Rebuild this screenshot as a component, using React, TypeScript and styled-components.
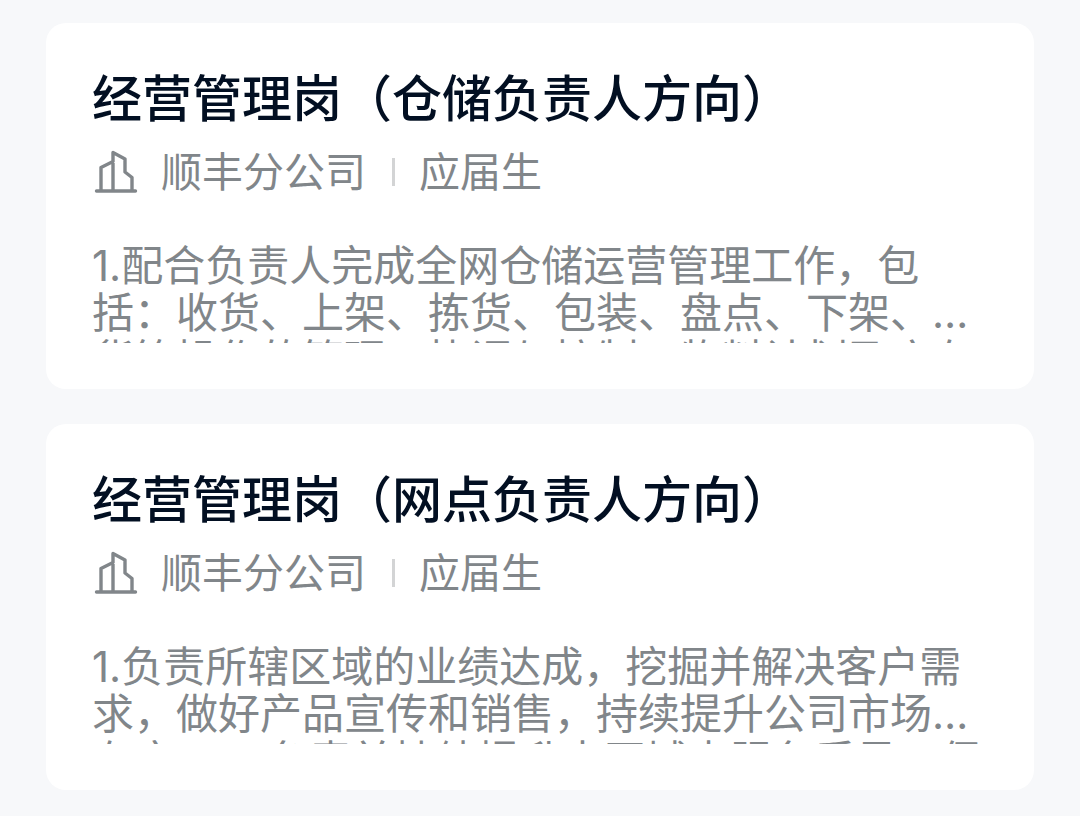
import React from "react";
import styled, { createGlobalStyle } from "styled-components";

const GlobalStyle = createGlobalStyle`
  * { box-sizing: border-box; }
  body {
    margin: 0;
    background: #f7f8fa;
    font-family: Inter, "Noto Sans CJK SC", sans-serif;
  }
`;

const List = styled.main`
  display: flex;
  flex-direction: column;
  gap: 35px;
  padding: 23px 46px 26px;
`;

const Card = styled.article`
  padding: 42px 46px 46px;
  border-radius: 20px;
  background: #fff;
`;

const Title = styled.h2`
  margin: 0;
  color: #020f22;
  font-family: "Noto Sans CJK SC", sans-serif;
  font-size: 50px;
  font-weight: 500;
  line-height: 60px;
`;

const Meta = styled.div`
  display: flex;
  align-items: center;
  margin-top: 23px;
  color: #81868a;
  font-size: 41px;
  font-weight: 400;
  line-height: 48px;
`;

const BuildingIcon = styled.svg`
  width: 48px;
  height: 48px;
  margin-right: 21px;
`;

const Divider = styled.span`
  width: 3px;
  height: 28px;
  margin: 0 24px 0 26px;
  background: #d3d4d5;
`;

const Description = styled.p`
  display: -webkit-box;
  -webkit-box-orient: vertical;
  -webkit-line-clamp: 2;
  height: 101px;
  margin: 46px 0 0;
  overflow: hidden;
  color: #81868a;
  font-size: 42px;
  font-weight: 400;
  line-height: 47px;
`;

const jobs = [
  {
    title: "经营管理岗（仓储负责人方向）",
    company: "顺丰分公司",
    audience: "应届生",
    description:
      "1.配合负责人完成全网仓储运营管理工作，包括：收货、上架、拣货、包装、盘点、下架、分货等操作的管理、协调与控制、物料计划及库存",
  },
  {
    title: "经营管理岗（网点负责人方向）",
    company: "顺丰分公司",
    audience: "应届生",
    description:
      "1.负责所辖区域的业绩达成，挖掘并解决客户需求，做好产品宣传和销售，持续提升公司市场占有率；2. 负责并持续提升本区域内服务质量，保",
  },
];

export default function App() {
  return (
    <>
      <GlobalStyle />
      <List>
        {jobs.map((job) => (
          <Card key={job.title}>
            <Title>{job.title}</Title>
            <Meta>
              <BuildingIcon
                viewBox="0 0 48 48"
                fill="none"
                stroke="currentColor"
                strokeWidth="3.4"
                strokeLinecap="round"
                strokeLinejoin="round"
                aria-hidden="true"
              >
                <path d="M4.500 43H43.500M9 43V19.500L21 13.500M21 43V4.500L33 11V24L40 29.500V43" />
              </BuildingIcon>
              <span>{job.company}</span>
              <Divider />
              <span>{job.audience}</span>
            </Meta>
            <Description>{job.description}</Description>
          </Card>
        ))}
      </List>
    </>
  );
}
